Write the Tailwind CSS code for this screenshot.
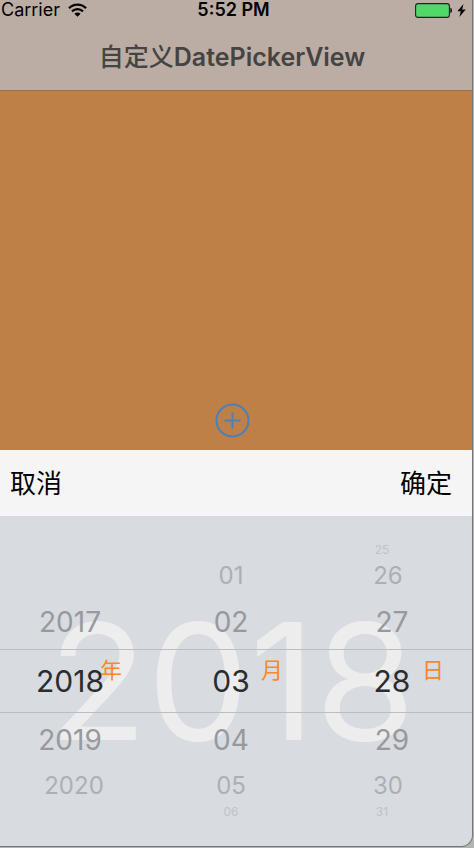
<!DOCTYPE html>
<html lang="zh-CN">
<head>
<meta charset="utf-8">
<meta name="viewport" content="width=device-width, initial-scale=1">
<title>自定义DatePickerView</title>
<script src="https://cdn.jsdelivr.net/npm/@tailwindcss/browser@4"></script>
</head>
<body class="min-h-screen bg-[#b4b4b4] pr-px font-[Inter,'Noto_Sans_CJK_SC',sans-serif]">
<div class="flex h-screen flex-col pb-px">
<div class="flex flex-1 flex-col overflow-hidden rounded-br-xl border-r border-b border-[#77777a] bg-[#be8046]">
  <header class="border-b border-[#97714f] bg-[#bcada4]">
    <div class="grid h-5 grid-cols-3 items-center pr-[6px] pl-px text-[18px] leading-5 text-black">
      <div class="flex items-center gap-2">
        <span>Carrier</span>
        <svg class="h-[14px] w-[19px]" viewBox="0 0 19 14" fill="none" stroke="#000" stroke-width="2.3" aria-label="Wi-Fi"><path d="M1 5.2C5.7.4 13.3.4 18 5.2"/><path d="M4 8.4c3-3 8-3 11 0"/><path d="M9.500 13.800 6.400 10.700c1.700-1.600 4.500-1.600 6.200 0z" fill="#000" stroke="none"/></svg>
      </div>
      <time class="text-center font-semibold whitespace-nowrap">5:52 PM</time>
      <div class="flex items-center justify-end gap-1">
        <svg class="h-[15px] w-[38px]" viewBox="0 0 38 15" aria-label="电池"><rect x=".6" y=".6" width="33.800" height="13.800" rx="2.500" fill="#52d769" stroke="#222" stroke-width="1.100"/><path d="M35.300 4.800c2.300.4 2.300 5 0 5.400z" fill="#111"/></svg>
        <svg class="h-[13px] w-[9px]" viewBox="0 0 9 13" aria-label="充电中"><path d="M6.500 0 .4 7.300h3.400L2.300 13 8.700 5.500H5.200z" fill="#000"/></svg>
      </div>
    </div>
    <h1 class="flex h-[70px] items-center justify-center pt-[3px] pr-2 text-[25px] leading-9 font-semibold text-[#444443]"><span class="font-medium">自定义</span><span>DatePickerView</span></h1>
  </header>

  <main class="flex flex-1 items-end justify-center pr-2 pb-3">
    <button type="button" aria-label="添加" class="text-[#4881bc]">
      <svg class="block size-[35px]" viewBox="0 0 35 35" fill="none" stroke="currentColor" stroke-width="2"><circle cx="17.500" cy="17.500" r="16"/><path d="M9.500 17.500h16M17.500 9.500v16"/></svg>
    </button>
  </main>

  <section aria-label="选择日期" class="text-center">
    <div class="flex h-[66px] items-center justify-between bg-[#f5f5f5] pt-[2px] pr-5 pl-[10px] text-[26px] leading-10 text-black">
      <button type="button">取消</button>
      <button type="button">确定</button>
    </div>
    <div class="relative isolate bg-[#d8dbe0]">
      <div aria-hidden="true" class="absolute inset-0 -z-10 flex items-center justify-center pr-2 text-[162px] leading-none text-[#ededee]">2018</div>
      <div aria-hidden="true" class="absolute inset-x-0 top-[133px] -z-10 h-16 border-y border-[#bbbec1]"></div>
      <div class="grid grid-cols-[140fr_182fr_140fr] py-[27px] pr-[10px] leading-none text-[#97999c]">
        <ul role="listbox" aria-label="年">
          <li class="h-[14px]"></li>
          <li class="h-[38px]"></li>
          <li role="option" class="flex h-[54px] items-center justify-center text-[28px]">2017</li>
          <li role="option" aria-selected="true" class="relative flex h-16 items-center justify-center text-[30px] text-[#2b2c2e]">2018<span class="absolute top-[9px] left-1/2 ml-[30px] text-[22px] leading-6 text-[#f98828]">年</span></li>
          <li role="option" class="flex h-[54px] items-center justify-center text-[28px]">2019</li>
          <li role="option" class="flex h-[38px] items-center justify-center pl-2 text-[24px] text-[#adb0b3]">2020</li>
          <li class="h-[14px]"></li>
        </ul>
        <ul role="listbox" aria-label="月">
          <li class="h-[14px]"></li>
          <li role="option" class="flex h-[38px] items-center justify-center text-[24px] text-[#adb0b3]">01</li>
          <li role="option" class="flex h-[54px] items-center justify-center text-[28px]">02</li>
          <li role="option" aria-selected="true" class="relative flex h-16 items-center justify-center text-[30px] text-[#2b2c2e]">03<span class="absolute top-[9px] left-1/2 ml-[30px] text-[22px] leading-6 text-[#f98828]">月</span></li>
          <li role="option" class="flex h-[54px] items-center justify-center text-[28px]">04</li>
          <li role="option" class="flex h-[38px] items-center justify-center text-[24px] text-[#adb0b3]">05</li>
          <li role="option" class="flex h-[14px] items-center justify-center text-[12px] text-[#c0c3c7]">06</li>
        </ul>
        <ul role="listbox" aria-label="日">
          <li role="option" class="flex h-[14px] items-center justify-center pr-5 text-[12px] text-[#c0c3c7]">25</li>
          <li role="option" class="flex h-[38px] items-center justify-center pr-2 text-[24px] text-[#adb0b3]">26</li>
          <li role="option" class="flex h-[54px] items-center justify-center text-[28px]">27</li>
          <li role="option" aria-selected="true" class="relative flex h-16 items-center justify-center text-[30px] text-[#2b2c2e]">28<span class="absolute top-[9px] left-1/2 ml-[30px] text-[22px] leading-6 text-[#f98828]">日</span></li>
          <li role="option" class="flex h-[54px] items-center justify-center text-[28px]">29</li>
          <li role="option" class="flex h-[38px] items-center justify-center pr-2 text-[24px] text-[#adb0b3]">30</li>
          <li role="option" class="flex h-[14px] items-center justify-center pr-5 text-[12px] text-[#c0c3c7]">31</li>
        </ul>
      </div>
    </div>
  </section>
</div>
</div>
</body>
</html>
